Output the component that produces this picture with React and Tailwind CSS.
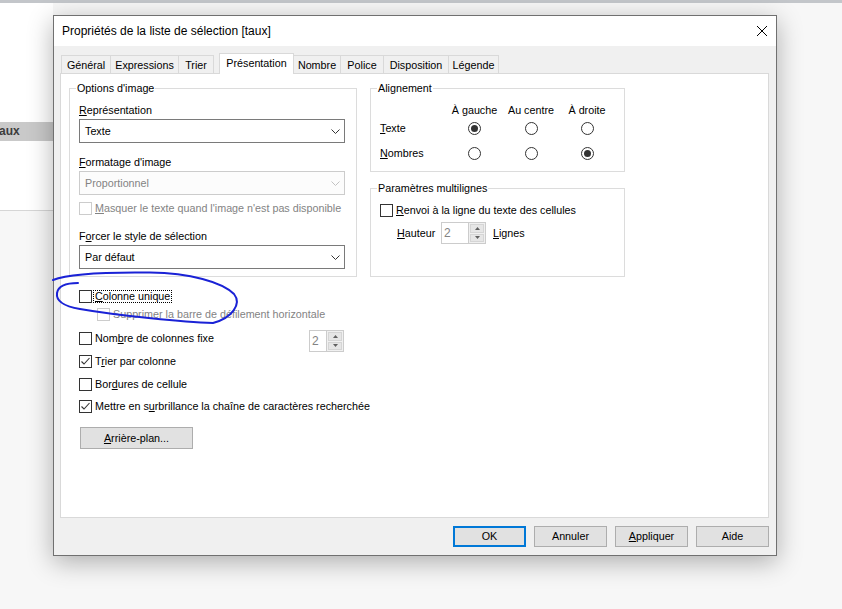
import React from "react";

const Check = ({ checked, disabled }) => (
  <span
    className={`w-[13px] h-[13px] shrink-0 border bg-white flex items-center justify-center ${
      disabled ? "border-[#cccccc]" : "border-[#333333]"
    }`}
  >
    {checked && (
      <svg width="11" height="11" viewBox="0 0 11 11">
        <path d="M1.5 5.5 L4 8 L9.5 2" fill="none" stroke="#333333" strokeWidth="1.1" />
      </svg>
    )}
  </span>
);

const Radio = ({ checked }) => (
  <span className="w-[13px] h-[13px] rounded-full border border-[#333333] bg-white flex items-center justify-center">
    {checked && <span className="w-[7px] h-[7px] rounded-full bg-[#333333]" />}
  </span>
);

const Chevron = ({ color }) => (
  <svg width="9" height="5" viewBox="0 0 9 5">
    <path d="M0.5 0.5 L4.5 4.5 L8.5 0.5" fill="none" stroke={color} strokeWidth="1" />
  </svg>
);

const Select = ({ value, disabled, className }) => (
  <div
    className={`h-[24px] w-full border flex items-center pl-[5px] pr-[4px] ${
      disabled ? "border-[#cccccc] bg-[#fcfcfc] text-[#838383]" : "border-[#7a7a7a] bg-white text-black"
    } ${className}`}
  >
    <span className="flex-1">{value}</span>
    <Chevron color={disabled ? "#c2c2c2" : "#333333"} />
  </div>
);

const Tri = ({ up }) => (
  <svg width="5" height="3" viewBox="0 0 5 3">
    <path d={up ? "M0 3 L2.5 0 L5 3 Z" : "M0 0 L2.5 3 L5 0 Z"} fill="#606060" />
  </svg>
);

const Spin = ({ className }) => (
  <div className={`h-[22px] border border-[#cccccc] bg-white flex ${className}`}>
    <span className="flex-1 pl-[2px] flex items-center text-[#838383] text-[12px]">2</span>
    <div className="w-[17px] flex flex-col gap-px p-px bg-[#f0f0f0] border-l border-[#cccccc]">
      <div className="flex-1 bg-[#e6e6e6] border border-[#d5d5d5] flex items-center justify-center">
        <Tri up />
      </div>
      <div className="flex-1 bg-[#e6e6e6] border border-[#d5d5d5] flex items-center justify-center">
        <Tri />
      </div>
    </div>
  </div>
);

const Row = ({ checked, disabled, className, children }) => (
  <div className={`flex items-center gap-[3px] h-[15px] whitespace-nowrap ${className}`}>
    <Check checked={checked} disabled={disabled} />
    <span className={disabled ? "text-[#838383]" : ""}>{children}</span>
  </div>
);

const Group = ({ legend, className, inner, children }) => (
  <fieldset className={`border border-[#dcdcdc] ${className}`}>
    <legend className="ml-[6px] px-[1px] leading-[13px]">{legend}</legend>
    <div className={inner}>{children}</div>
  </fieldset>
);

const tabs = [
  { label: "Général", w: "w-[50px] border-l" },
  { label: "Expressions", w: "w-[68px]" },
  { label: "Trier", w: "w-[35px]" },
];
const tabsAfter = [
  { label: "Nombre", w: "w-[47px]" },
  { label: "Police", w: "w-[43px]" },
  { label: "Disposition", w: "w-[65px]" },
  { label: "Légende", w: "w-[50px]" },
];

const Tab = ({ label, w }) => (
  <div className={`h-[18px] pt-[1px] border-t border-r border-[#d9d9d9] bg-[#f0f0f0] flex items-center justify-center ${w}`}>
    {label}
  </div>
);

const Button = ({ children, primary, className }) => (
  <button
    className={`h-[21px] w-[73px] bg-[#e1e1e1] flex items-center justify-center ${
      primary ? "border-2 border-[#0078d7]" : "border border-[#adadad]"
    } ${className}`}
  >
    {children}
  </button>
);

export default function App() {
  return (
    <div className="relative w-[842px] h-[609px] overflow-hidden bg-[#f7f7f7] font-['Liberation_Sans',Arial,sans-serif] text-[10.75px] leading-[15px] text-black">
      <div className="h-[3px] bg-[#c3c6ca]" />
      <div className="flex">
        {/* app window behind the dialog */}
        <div className="w-[53px] shrink-0">
          <div className="h-[208px] bg-white border-b border-[#d6d6d6] pt-[119px]">
            <div className="h-[19px] bg-[#c9c9c9] flex items-center font-bold text-[12px] text-[#3c3c3c] ml-[-1px]">
              aux
            </div>
          </div>
        </div>

        {/* dialog */}
        <div className="mt-[12px] w-[724px] h-[541px] shrink-0 border border-[#707070] bg-[#f0f0f0] shadow-[0_6px_24px_rgba(0,0,0,0.3)] flex flex-col">
          <div className="h-[30px] bg-white flex items-center justify-between pl-[8px] pr-[9px]">
            <span className="text-[12px]">Propriétés de la liste de sélection [taux]</span>
            <svg width="10" height="10" viewBox="0 0 10 10">
              <path d="M0 0 L10 10 M10 0 L0 10" stroke="#000" strokeWidth="1" />
            </svg>
          </div>

          <div className="pl-[6px] pt-[7px]">
            <div className="h-[20px] flex items-end pl-[1px]">
              {tabs.map((t) => (
                <Tab key={t.label} {...t} />
              ))}
              <div className="relative z-10 ml-[5px] mb-[-1px] h-[21px] w-[75px] bg-white border-t border-l border-r border-[#d9d9d9] flex items-start justify-center pt-[2px]">
                Présentation
              </div>
              {tabsAfter.map((t) => (
                <Tab key={t.label} {...t} />
              ))}
            </div>

            <div className="w-[709px] h-[445px] bg-white border border-[#d9d9d9] pt-[8px] pl-[8px]">
              <div className="flex gap-[13px]">
                <Group legend="Options d'image" className="w-[288px] h-[195px]" inner="pl-[9px] pr-[11px]">
                  <div className="mt-[8px]">
                    <u>R</u>eprésentation
                  </div>
                  <Select value="Texte" className="mt-[1px]" />
                  <div className="mt-[12px]">
                    <u>F</u>ormatage d'image
                  </div>
                  <Select value="Proportionnel" disabled className="mt-[1px]" />
                  <Row disabled className="mt-[6px]">
                    <u>M</u>asquer le texte quand l'image n'est pas disponible
                  </Row>
                  <div className="mt-[13px]">
                    F<u>o</u>rcer le style de sélection
                  </div>
                  <Select value="Par défaut" className="mt-[1px]" />
                </Group>

                <div className="flex flex-col">
                  <Group legend="Alignement" className="w-[255px] h-[90px]" inner="pl-[9px]">
                    <div className="mt-[8px] grid grid-cols-[66px_57px_56px_56px] h-[15px]">
                      <span />
                      <span className="text-center">À gauche</span>
                      <span className="text-center">Au centre</span>
                      <span className="text-center">À droite</span>
                    </div>
                    <div className="grid grid-cols-[66px_57px_56px_56px] h-[20px] items-center">
                      <span>
                        <u>T</u>exte
                      </span>
                      <span className="flex justify-center">
                        <Radio checked />
                      </span>
                      <span className="flex justify-center">
                        <Radio />
                      </span>
                      <span className="flex justify-center">
                        <Radio />
                      </span>
                    </div>
                    <div className="mt-[5px] grid grid-cols-[66px_57px_56px_56px] h-[20px] items-center">
                      <span>
                        <u>N</u>ombres
                      </span>
                      <span className="flex justify-center">
                        <Radio />
                      </span>
                      <span className="flex justify-center">
                        <Radio />
                      </span>
                      <span className="flex justify-center">
                        <Radio checked />
                      </span>
                    </div>
                  </Group>

                  <Group legend="Paramètres multilignes" className="mt-[10px] w-[255px] h-[95px]" inner="pl-[9px]">
                    <Row className="mt-[8px]">
                      <u>R</u>envoi à la ligne du texte des cellules
                    </Row>
                    <div className="mt-[4px] flex items-center h-[22px] pl-[17px]">
                      <span className="w-[44px]">
                        <u>H</u>auteur
                      </span>
                      <Spin className="w-[45px]" />
                      <span className="ml-[7px]">
                        <u>L</u>ignes
                      </span>
                    </div>
                  </Group>
                </div>
              </div>

              <div className="pl-[10px]">
                <div className="mt-[12px] flex items-center gap-[3px] h-[15px]">
                  <Check />
                  <span className="ml-[-2px] px-[1px] h-[13px] leading-[11px] border border-dotted border-black">
                    <u>C</u>olonne unique
                  </span>
                </div>
                <Row disabled className="mt-[3px] ml-[18px]">
                  Supprimer la barre de défilement horizontale
                </Row>
                <div className="mt-[9px] flex items-center gap-[3px] h-[15px] w-[265px]">
                  <Check />
                  <span>
                    Nom<u>b</u>re de colonnes fixe
                  </span>
                  <Spin className="ml-auto mt-[5px] w-[35px]" />
                </div>
                <Row checked className="mt-[8px]">
                  T<u>r</u>ier par colonne
                </Row>
                <Row className="mt-[8px]">
                  Bor<u>d</u>ures de cellule
                </Row>
                <Row checked className="mt-[7px]">
                  Mettre en s<u>u</u>rbrillance la chaîne de caractères recherchée
                </Row>
                <button className="mt-[13px] ml-[1px] w-[113px] h-[22px] bg-[#e1e1e1] border border-[#adadad]">
                  <u>A</u>rrière-plan...
                </button>
              </div>
            </div>

            <div className="mt-[8px] w-[709px] flex justify-end gap-[8px]">
              <Button primary>OK</Button>
              <Button>Annuler</Button>
              <Button>
                <u>A</u>ppliquer
              </Button>
              <Button>Aide</Button>
            </div>
          </div>
        </div>
      </div>

      {/* hand-drawn annotation */}
      <svg className="absolute left-0 top-0 pointer-events-none" width="842" height="609" viewBox="0 0 842 609">
        <path
          d="M53 280 C70 273, 110 272, 150 272.5 C190 273, 222 282, 234 294 C242 304, 232 318, 213 323 C185 322, 120 316, 80 309 C62 306, 56 300, 57 293 C58 287, 64 283, 78 283"
          fill="none"
          stroke="#1a22d6"
          strokeWidth="2"
          strokeLinecap="round"
        />
      </svg>
    </div>
  );
}
